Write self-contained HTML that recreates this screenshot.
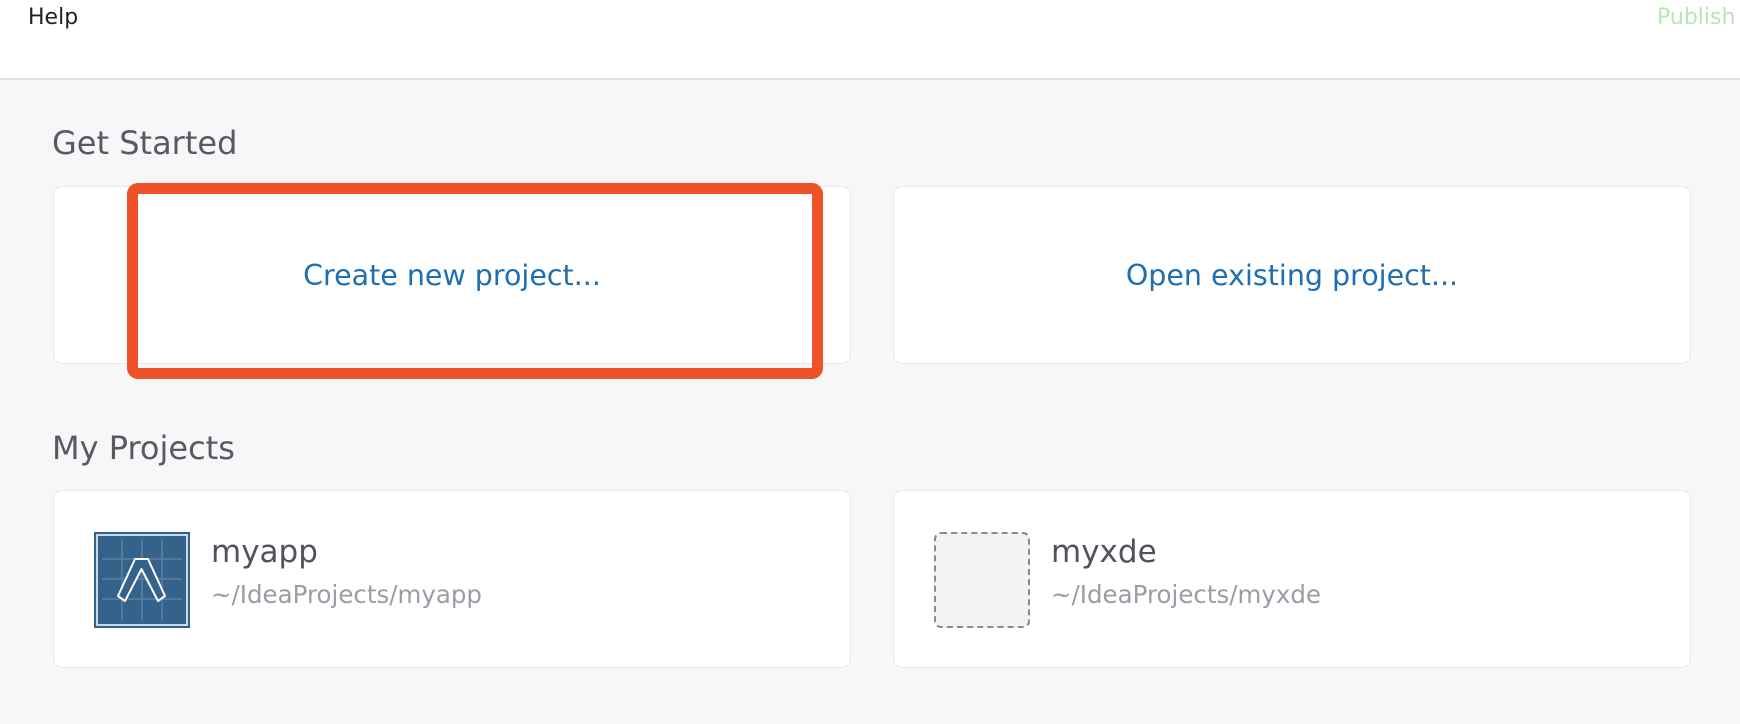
<!DOCTYPE html>
<html><head><meta charset="utf-8"><style>
*{margin:0;padding:0;box-sizing:border-box}
body{width:1740px;height:724px;overflow:hidden;background:#f7f7f7;font-family:"DejaVu Sans","Liberation Sans",sans-serif;position:relative}
.hdr{position:absolute;left:0;top:0;width:1740px;height:80px;background:#fff;border-bottom:2px solid #dde0e4}
.help{position:absolute;left:28px;top:5px;font-size:22px;color:#222}
.pub{position:absolute;left:1657px;top:5px;font-size:22px;color:#b8e6b4;white-space:nowrap}
.h{position:absolute;left:52px;font-size:32px;color:#555a66}
.card{position:absolute;background:#fff;border:1px solid #e8e8e8;border-radius:9px}
.link{position:absolute;font-size:28.5px;color:#1e6fb0;white-space:nowrap;transform:translateX(-50%)}
.orange{position:absolute;left:127px;top:183px;width:696px;height:196px;border:11px solid #ef5228;border-radius:11px}
.name{position:absolute;font-size:31px;color:#4f5260}
.path{position:absolute;font-size:24.5px;color:#9b9da6}
</style></head><body>
<div class="hdr"><div class="help">Help</div><div class="pub">Publish</div></div>
<div class="h" style="top:124px">Get Started</div>
<div class="card" style="left:53px;top:186px;width:798px;height:178px"></div>
<div class="card" style="left:893px;top:186px;width:798px;height:178px"></div>
<div class="link" style="left:452px;top:259px">Create new project...</div>
<div class="link" style="left:1292px;top:259px">Open existing project...</div>
<div class="orange"></div>
<div class="h" style="top:429px">My Projects</div>
<div class="card" style="left:53px;top:490px;width:798px;height:178px"></div>
<div class="card" style="left:893px;top:490px;width:798px;height:178px"></div>
<svg style="position:absolute;left:94px;top:532px" width="96" height="96" viewBox="0 0 96 96">
<rect x="0" y="0" width="96" height="96" fill="#34628a"/>
<rect x="3" y="3" width="90" height="90" fill="none" stroke="#fff" stroke-width="1.5"/>
<g stroke="#4f7aa0" stroke-width="2">
<line x1="28" y1="8" x2="28" y2="88"/><line x1="48" y1="8" x2="48" y2="88"/><line x1="68" y1="8" x2="68" y2="88"/>
<line x1="8" y1="27" x2="88" y2="27"/><line x1="8" y1="47" x2="88" y2="47"/><line x1="8" y1="67" x2="88" y2="67"/>
</g>
<path d="M24 64 L41 27 L54 27 L71 64 L64 69 L47.5 37 L31 69 Z" fill="#34628a" stroke="#fff" stroke-width="2" stroke-linejoin="round"/>
</svg>
<div class="name" style="left:211px;top:534px">myapp</div>
<div class="path" style="left:211px;top:580px">~/IdeaProjects/myapp</div>
<div style="position:absolute;left:934px;top:532px;width:96px;height:96px;background:#f3f3f3;border:2px dashed #8a8a8a;border-radius:7px"></div>
<div class="name" style="left:1051px;top:534px">myxde</div>
<div class="path" style="left:1051px;top:580px">~/IdeaProjects/myxde</div>
</body></html>
